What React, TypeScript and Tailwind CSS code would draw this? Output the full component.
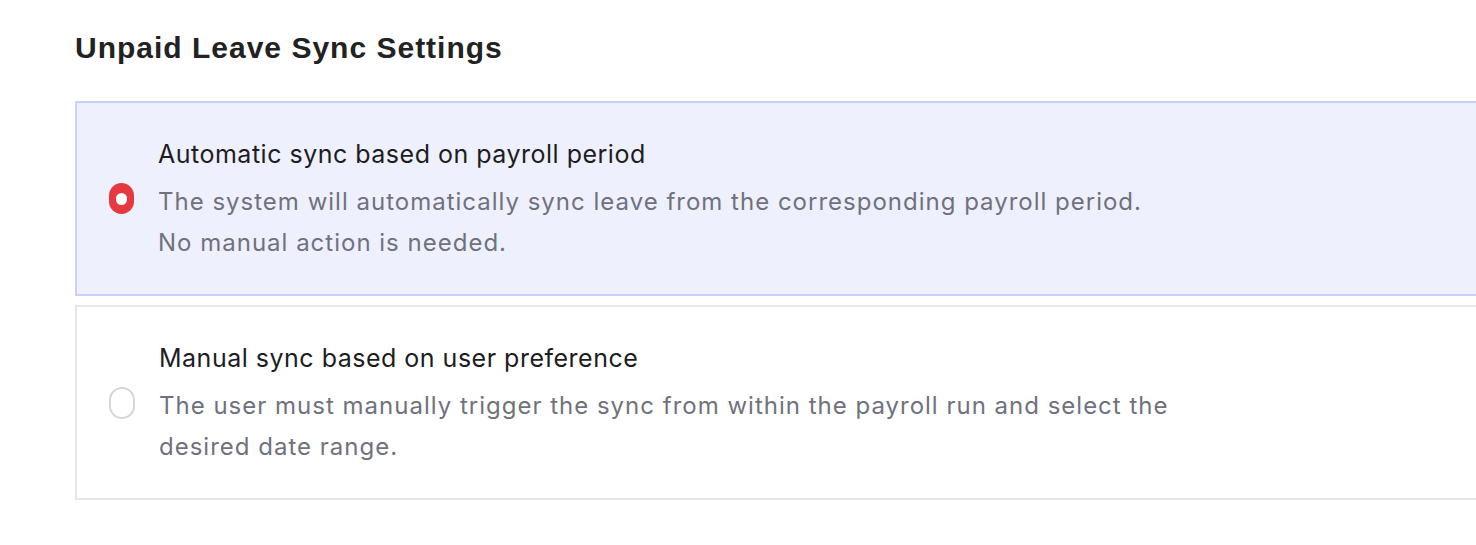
import React, { useState } from 'react';

const options = [
  {
    id: 'auto',
    title: 'Automatic sync based on payroll period',
    lines: ['The system will automatically sync leave from the corresponding payroll period.', 'No manual action is needed.'],
  },
  {
    id: 'manual',
    title: 'Manual sync based on user preference',
    lines: ['The user must manually trigger the sync from within the payroll run and select the', 'desired date range.'],
  },
];

const Radio: React.FC<{ checked: boolean }> = ({ checked }) =>
  checked ? (
    <span className="flex items-center justify-center w-[25px] h-[31px] rounded-full bg-[#e5383f]">
      <span className="w-[11px] h-[12px] rounded-full bg-white" />
    </span>
  ) : (
    <span className="block w-[26px] h-[32px] rounded-full border-2 border-[#d4d6dc] bg-white" />
  );

export default function App() {
  const [selected, setSelected] = useState('auto');

  return (
    <div className="w-[1476px] h-[545px] overflow-hidden bg-white" style={{ fontFamily: 'Inter, "Liberation Sans", sans-serif' }}>
      <div className="pl-[75px] pt-[30px]">
        <h2
          className="text-[30px] leading-[36px] font-bold tracking-[1px] text-[#222]"
          style={{ fontFamily: '"Liberation Sans", Arial, sans-serif' }}
        >
          Unpaid Leave Sync Settings
        </h2>

        <div className="mt-[35px] flex flex-col gap-[9px] w-[1460px]">
          {options.map((o) => {
            const on = selected === o.id;
            return (
              <button
                key={o.id}
                onClick={() => setSelected(o.id)}
                className={`flex items-center text-left h-[195px] border-2 pl-[32px] ${
                  on ? 'bg-[#eef0fd] border-[#c9d1f6]' : 'bg-white border-[#e6e6e8]'
                }`}
              >
                <Radio checked={on} />
                <div className="ml-[24px]">
                  <div className="text-[25px] leading-[40px] tracking-[0.5px] text-[#1d1d1f]">{o.title}</div>
                  <div className="mt-[7px] text-[24px] leading-[41px] tracking-[1px] text-[#6f727d]">
                    {o.lines.map((l) => (
                      <div key={l}>{l}</div>
                    ))}
                  </div>
                </div>
              </button>
            );
          })}
        </div>
      </div>
    </div>
  );
}
